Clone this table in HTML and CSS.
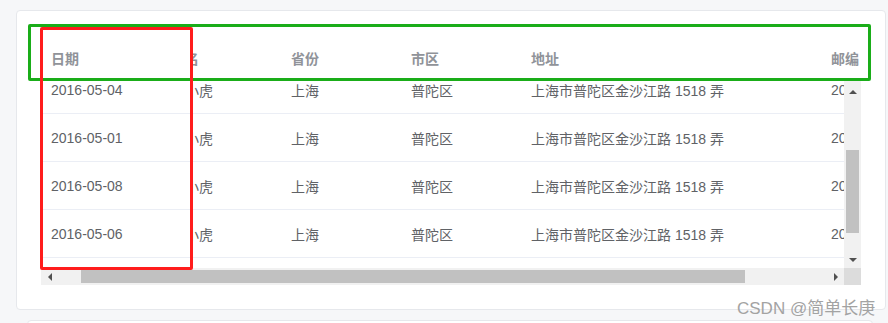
FILE: index.html
```html
<!DOCTYPE html>
<html lang="zh">
<head>
<meta charset="utf-8">
<link rel="stylesheet" href="styles.css">
</head>
<body>
<div class="page">
  <div class="card">
    <div class="grid">
      <div class="thead-wrap">
        <table class="tbl">
          <colgroup><col class="c1"><col class="c2"><col class="c3"><col class="c4"><col class="c5"><col class="c6"></colgroup>
          <tr><th>日期</th><th>姓名</th><th>省份</th><th>市区</th><th>地址</th><th>邮编</th></tr>
        </table>
      </div>
      <div class="body-row">
        <div class="tbody-view">
          <table class="tbl body">
            <colgroup><col class="c1"><col class="c2"><col class="c3"><col class="c4"><col class="c5"><col class="c6"></colgroup>
            <tr><td>2016-05-04</td><td>王小虎</td><td>上海</td><td>普陀区</td><td>上海市普陀区金沙江路 1518 弄</td><td>200333</td></tr>
            <tr><td>2016-05-01</td><td>王小虎</td><td>上海</td><td>普陀区</td><td>上海市普陀区金沙江路 1518 弄</td><td>200333</td></tr>
            <tr><td>2016-05-08</td><td>王小虎</td><td>上海</td><td>普陀区</td><td>上海市普陀区金沙江路 1518 弄</td><td>200333</td></tr>
            <tr><td>2016-05-06</td><td>王小虎</td><td>上海</td><td>普陀区</td><td>上海市普陀区金沙江路 1518 弄</td><td>200333</td></tr>
            <tr><td>2016-05-07</td><td>王小虎</td><td>上海</td><td>普陀区</td><td>上海市普陀区金沙江路 1518 弄</td><td>200333</td></tr>
          </table>
        </div>
        <div class="vscroll">
          <div class="sbtn"><span class="arr up"></span></div>
          <div class="vtrack"><div class="vthumb"></div></div>
          <div class="sbtn"><span class="arr down"></span></div>
        </div>
      </div>
      <div class="hrow">
        <div class="hscroll">
          <div class="sbtn h"><span class="arr left"></span></div>
          <div class="htrack"><div class="hthumb"></div></div>
          <div class="sbtn h"><span class="arr right"></span></div>
        </div>
        <div class="corner"></div>
      </div>
      <div class="fixed-col">
        <div class="fixed-head">日期</div>
        <div class="fixed-body">
          <div class="fixed-inner">
            <div class="fcell">2016-05-04</div>
            <div class="fcell">2016-05-01</div>
            <div class="fcell">2016-05-08</div>
            <div class="fcell">2016-05-06</div>
            <div class="fcell">2016-05-07</div>
          </div>
        </div>
      </div>
    </div>
  </div>
  <div class="card2"></div>
  <div class="mark green"></div>
  <div class="mark red"></div>
  <div class="watermark">CSDN @简单长庚</div>
</div>
</body>
</html>
```
FILE: styles.css
```css
html, body {
  margin: 0;
  padding: 0;
  background: #f6f7f9;
  font-family: "Liberation Sans", "Noto Sans CJK SC", sans-serif;
  overflow: hidden;
}
.page {
  position: relative;
  width: 888px;
  height: 323px;
  padding-top: 10px;
  box-sizing: border-box;
  overflow: hidden;
}
.card {
  margin-left: 16px;
  width: 870px;
  height: 300px;
  box-sizing: border-box;
  border: 1px solid #e6e8ec;
  border-radius: 4px;
  background: #fff;
  padding: 24px;
}
.grid {
  position: relative;
  display: flex;
  flex-direction: column;
  width: 820px;
}
.thead-wrap {
  width: 820px;
  height: 46px;
  overflow: hidden;
}
.tbl {
  border-collapse: collapse;
  table-layout: fixed;
  width: 900px;
  font-size: 14px;
}
.c1, .c2, .c3, .c4, .c6 { width: 120px; }
.c5 { width: 300px; }
.tbl th {
  height: 45px;
  padding: 0 10px;
  text-align: left;
  color: #909399;
  font-weight: bold;
  border-bottom: 1px solid #ebeef5;
  white-space: nowrap;
  overflow: hidden;
}
.tbl td {
  height: 47px;
  padding: 0 10px;
  color: #606266;
  border-bottom: 1px solid #ebeef5;
  white-space: nowrap;
  overflow: hidden;
}
.body-row {
  display: flex;
  height: 187px;
}
.tbody-view {
  width: 803px;
  height: 187px;
  overflow: hidden;
}
.tbl.body {
  margin-top: -15px;
}
.fixed-col {
  position: absolute;
  left: 0;
  top: 0;
  width: 151px;
  height: 233px;
  background: #fff;
  display: flex;
  flex-direction: column;
  font-size: 14px;
}
.fixed-head {
  height: 45px;
  flex: none;
  border-bottom: 1px solid #ebeef5;
  padding: 0 10px;
  display: flex;
  align-items: center;
  color: #909399;
  font-weight: bold;
}
.fixed-body {
  height: 187px;
  overflow: hidden;
}
.fixed-inner {
  margin-top: -15px;
}
.fcell {
  height: 47px;
  border-bottom: 1px solid #ebeef5;
  padding: 0 10px;
  display: flex;
  align-items: center;
  color: #606266;
}
.vscroll {
  width: 17px;
  display: flex;
  flex-direction: column;
  background: #f1f1f1;
}
.sbtn {
  width: 17px;
  height: 17px;
  display: flex;
  align-items: center;
  justify-content: center;
  flex: none;
}
.vscroll .sbtn:first-child { padding-top: 4px; box-sizing: border-box; }
.vtrack { flex: 1; }
.vthumb {
  margin: 52px 2px 0 2px;
  height: 83px;
  background: #c1c1c1;
}
.arr { width: 0; height: 0; display: block; }
.arr.up { border-left: 4px solid transparent; border-right: 4px solid transparent; border-bottom: 4px solid #505050; }
.arr.down { border-left: 4px solid transparent; border-right: 4px solid transparent; border-top: 4px solid #505050; }
.arr.left { border-top: 4px solid transparent; border-bottom: 4px solid transparent; border-right: 4px solid #505050; }
.arr.right { border-top: 4px solid transparent; border-bottom: 4px solid transparent; border-left: 4px solid #505050; }
.hrow {
  display: flex;
  height: 17px;
}
.hscroll {
  width: 803px;
  display: flex;
  background: #f1f1f1;
}
.htrack { flex: 1; }
.hthumb {
  margin: 2px 0 0 23px;
  width: 664px;
  height: 13px;
  background: #c1c1c1;
}
.corner {
  width: 17px;
  background: #dcdcdc;
}
.card2 {
  margin: 10px 0 0 27px;
  width: 846px;
  height: 20px;
  box-sizing: border-box;
  border: 1px solid #e6e8ec;
  border-radius: 4px;
  background: #fff;
}
.mark {
  position: absolute;
  box-sizing: border-box;
  border-radius: 2px;
}
.green {
  left: 28px;
  top: 24px;
  width: 843px;
  height: 57px;
  border: 3px solid #1aad19;
}
.red {
  left: 40px;
  top: 27px;
  width: 153px;
  height: 243px;
  border: 3px solid #ff1c1c;
}
.watermark {
  position: absolute;
  left: 737px;
  top: 294px;
  font-size: 17px;
  color: #a3a3a3;
  white-space: nowrap;
}
```
